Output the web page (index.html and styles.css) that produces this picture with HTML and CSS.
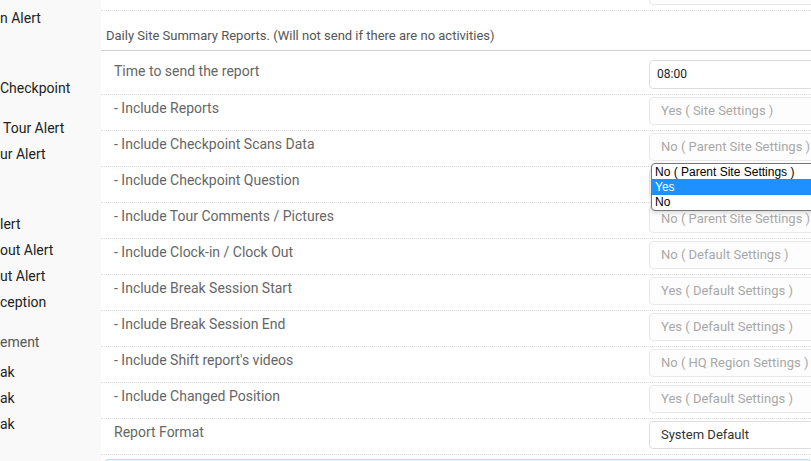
FILE: index.html
```html
<!DOCTYPE html>
<html>
<head>
<meta charset="utf-8">
<link rel="stylesheet" href="styles.css">
</head>
<body>
<div class="page">
  <aside class="sidebar">
    <ul class="nav">
      <li class="nav-item">n Alert</li>
      <li class="nav-item gap-lg">Checkpoint</li>
      <li class="nav-item gap-md indent">Tour Alert</li>
      <li class="nav-item">ur Alert</li>
      <li class="nav-item gap-lg">lert</li>
      <li class="nav-item">out Alert</li>
      <li class="nav-item">ut Alert</li>
      <li class="nav-item">ception</li>
      <li class="nav-head gap-md">ement</li>
      <li class="nav-item gap-sm">ak</li>
      <li class="nav-item">ak</li>
      <li class="nav-item">ak</li>
    </ul>
  </aside>
  <main class="main">
    <div class="row row-cut">
      <div class="label"></div>
      <div class="field"><div class="box disabled"></div></div>
    </div>
    <div class="section-head">Daily Site Summary Reports. (Will not send if there are no activities)</div>
    <div class="row row-first">
      <div class="label">Time to send the report</div>
      <div class="field"><div class="box input">08:00</div></div>
    </div>
    <div class="row">
      <div class="label">- Include Reports</div>
      <div class="field"><div class="box disabled">Yes ( Site Settings )</div></div>
    </div>
    <div class="row">
      <div class="label">- Include Checkpoint Scans Data</div>
      <div class="field"><div class="box disabled">No ( Parent Site Settings )</div></div>
    </div>
    <div class="row">
      <div class="label">- Include Checkpoint Question</div>
      <div class="field">
        <div class="box disabled"></div>
        <ul class="popup">
          <li class="opt">No ( Parent Site Settings )</li>
          <li class="opt selected">Yes</li>
          <li class="opt">No</li>
        </ul>
      </div>
    </div>
    <div class="row">
      <div class="label">- Include Tour Comments / Pictures</div>
      <div class="field"><div class="box disabled">No ( Parent Site Settings )</div></div>
    </div>
    <div class="row">
      <div class="label">- Include Clock-in / Clock Out</div>
      <div class="field"><div class="box disabled">No ( Default Settings )</div></div>
    </div>
    <div class="row">
      <div class="label">- Include Break Session Start</div>
      <div class="field"><div class="box disabled">Yes ( Default Settings )</div></div>
    </div>
    <div class="row">
      <div class="label">- Include Break Session End</div>
      <div class="field"><div class="box disabled">Yes ( Default Settings )</div></div>
    </div>
    <div class="row">
      <div class="label">- Include Shift report's videos</div>
      <div class="field"><div class="box disabled">No ( HQ Region Settings )</div></div>
    </div>
    <div class="row">
      <div class="label">- Include Changed Position</div>
      <div class="field"><div class="box disabled">Yes ( Default Settings )</div></div>
    </div>
    <div class="row">
      <div class="label label-plain">Report Format</div>
      <div class="field"><div class="box select">System Default</div></div>
    </div>
    <div class="info"></div>
  </main>
</div>
</body>
</html>
```
FILE: styles.css
```css
html, body {
  margin: 0;
  padding: 0;
  background: #ffffff;
  overflow: hidden;
}
body {
  font-family: Roboto, "Liberation Sans", Arial, sans-serif;
  width: 811px;
  height: 461px;
}
.page {
  display: flex;
  height: 461px;
  overflow: hidden;
}
.sidebar {
  width: 101px;
  flex: none;
  background: #f9f9f9;
  overflow: hidden;
}
.nav {
  list-style: none;
  margin: 0;
  padding: 5px 0 0 0;
}
.nav-item, .nav-head {
  font-size: 14px;
  line-height: 26px;
  height: 26px;
  color: #222;
  white-space: nowrap;
}
.nav-head {
  color: #555;
}
.indent { padding-left: 3px; }
.gap-lg { margin-top: 44px; }
.gap-md { margin-top: 14px; }
.gap-sm { margin-top: 4px; }

.main {
  flex: 1;
  min-width: 0;
  overflow: hidden;
}
.row {
  display: flex;
  align-items: flex-start;
  padding: 2px 0 5px 0;
  border-bottom: 1px dotted #dcdcdc;
}
.row-cut {
  margin-top: -25px;
}
.row-first {
  padding-top: 9px;
}
.row-first .box {
  height: 29px;
}
.label {
  width: 535px;
  flex: none;
  padding: 1px 0 0 13px;
  font-size: 14px;
  line-height: 20px;
  color: #666;
  white-space: nowrap;
}
.field {
  flex: none;
  width: 240px;
  position: relative;
}
.box {
  box-sizing: border-box;
  height: 28px;
  border: 1px solid #e8e8e8;
  border-radius: 4px;
  font-size: 13px;
  line-height: 26px;
  padding-left: 11px;
  white-space: nowrap;
}
.disabled {
  background: #fdfdfd;
  color: #a8a8a8;
}
.input {
  background: #fff;
  border-color: #dedede;
  color: #222;
  padding-left: 7px;
  font-size: 12px;
}
.select {
  background: #fff;
  border-color: #dedede;
  color: #333;
}
.section-head {
  padding: 15px 5px 5px 5px;
  margin-top: 1px;
  font-size: 13px;
  line-height: 18px;
  color: #555;
  border-bottom: 1px solid #cfcfcf;
  white-space: nowrap;
}
.popup {
  position: absolute;
  left: 2px;
  top: -6px;
  width: 230px;
  margin: 0;
  padding: 1px 0;
  list-style: none;
  background: #fff;
  border: 1px solid #767676;
  border-radius: 4px;
  box-shadow: 0 2px 4px rgba(0,0,0,0.15);
  font-family: "Liberation Sans", Arial, sans-serif;
  font-size: 12px;
  z-index: 2;
}
.opt {
  height: 14px;
  line-height: 14px;
  padding-left: 3px;
  color: #000;
  white-space: nowrap;
}
.selected {
  background: #1e90ff;
  color: #fff;
  height: 16px;
  line-height: 16px;
}
.info {
  margin: 4px 0 0 4px;
  height: 20px;
  background: #e8f4fc;
  border: 1px solid #bcdcf2;
  border-radius: 3px;
}
```
